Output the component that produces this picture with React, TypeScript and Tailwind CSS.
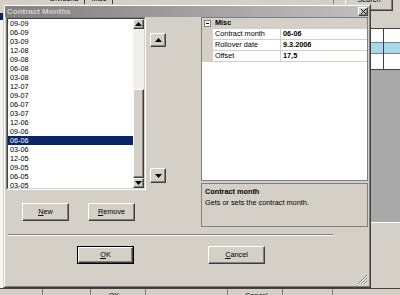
import React from 'react';

const months = [
  '09-09', '06-09', '03-09', '12-08', '09-08', '06-08', '03-08', '12-07', '09-07', '06-07',
  '03-07', '12-06', '09-06', '06-06', '03-06', '12-05', '09-05', '06-05', '03-05',
];

const props = [
  { name: 'Contract month', value: '06-06' },
  { name: 'Rollover date', value: '9.3.2006' },
  { name: 'Offset', value: '17,5' },
];

const raised =
  'bg-[#d4d0c8] border border-t-white border-l-white border-r-[#404040] border-b-[#404040] shadow-[inset_-1px_-1px_0_#808080]';

const Btn = ({ label, w, isDefault }: { label: React.ReactNode; w: string; isDefault?: boolean }) => (
  <div className={`${w} h-[18px] ${isDefault ? 'border border-black' : ''}`}>
    <div className={`${raised} w-full h-full flex items-center justify-center text-black`}>{label}</div>
  </div>
);

const Arrow = ({ up }: { up?: boolean }) => (
  <svg width="7" height="4" viewBox="0 0 7 4">
    <polygon points={up ? '3.5,0 7,4 0,4' : '0,0 7,0 3.5,4'} fill="#000" />
  </svg>
);

const ListBox = () => (
  <div className="ml-[1px] w-[140px] h-[173px] border border-t-[#808080] border-l-[#808080] border-r-white border-b-white">
    <div className="w-full h-full border border-t-[#404040] border-l-[#404040] border-r-[#d4d0c8] border-b-[#d4d0c8] bg-white flex">
      <div className="flex-1 overflow-hidden">
        {months.map((m) =>
          m === '06-06' ? (
            <div key={m} className="h-[9px] leading-[9px] pl-[2px] bg-[#0a246a] text-white">
              {m}
            </div>
          ) : (
            <div key={m} className="h-[9px] leading-[9px] pl-[2px] text-black">
              {m}
            </div>
          )
        )}
      </div>
      <div className="w-[11px] flex flex-col">
        <div className={`${raised} h-[10px] flex items-center justify-center`}>
          <Arrow up />
        </div>
        <div className="h-[60px] bg-[#f1efea]" />
        <div className={`${raised} flex-1`} />
        <div className={`${raised} h-[10px] flex items-center justify-center`}>
          <Arrow />
        </div>
      </div>
    </div>
  </div>
);

const PropertyGrid = () => (
  <div className="flex flex-col">
    <div className="h-[164px] border border-[#808080] bg-white flex flex-col">
      <div className="h-[11px] bg-[#d4d0c8] flex items-center">
        <div className="ml-[2px] w-[7px] h-[7px] border border-[#808080] bg-white flex items-center justify-center">
          <div className="w-[3px] h-[1px] bg-black" />
        </div>
        <span className="ml-[4px] font-bold">Misc</span>
      </div>
      {props.map((p) => (
        <div key={p.name} className="h-[11px] flex">
          <div className="w-[11px] bg-[#d4d0c8]" />
          <div className="w-[67px] border-b border-[#d4d0c8] pl-[2px] leading-[10px] truncate">{p.name}</div>
          <div className="w-[1px] bg-[#d4d0c8]" />
          <div className="flex-1 border-b border-[#d4d0c8] pl-[2px] leading-[10px] font-bold">{p.value}</div>
        </div>
      ))}
    </div>
    <div className="mt-[2px] h-[44px] border border-[#808080] bg-[#d4d0c8] px-[3px] pt-[3px]">
      <div className="font-bold leading-[10px]">Contract month</div>
      <div className="leading-[11px]">Gets or sets the contract month.</div>
    </div>
  </div>
);

const Background = () => (
  <div className="absolute inset-0 bg-[#d4d0c8]">
    {/* left strip */}
    <div className="absolute left-0 top-[13px] w-[4px] h-[7px] bg-[#0a246a]" />
    <div className="absolute left-0 top-[20px] w-[4px] h-[268px] bg-[#f4f4f2]" />
    {/* top tabs */}
    <div className="absolute left-[44px] top-[-6px] h-[10px] flex text-black">
      <div className="px-[6px] border-r border-[#404040]">Dividend</div>
      <div className="px-[6px] border-r border-[#404040]">Misc</div>
    </div>
    <div className="absolute left-[333px] top-0 w-[1px] h-[4px] bg-[#808080]" />
    <div className={`absolute left-[345px] top-[-6px] w-[48px] h-[17px] ${raised} flex justify-center`}>
      <span className="leading-[10px]">Search</span>
    </div>
    {/* right grid */}
    <div className="absolute left-[369px] top-[28px] w-[31px] h-[42px] border-t border-b border-[#404040] bg-white flex flex-col">
      <div className="h-[14px] border-b border-[#808080]" />
      <div className="h-[11px] bg-[#a6d8ea] border-b border-[#808080]" />
      <div className="flex-1" />
      <div className="absolute left-[14px] top-0 w-[1px] h-full bg-[#404040]" />
    </div>
    <div className="absolute left-[369px] top-[70px] w-[31px] h-[152px] bg-[#a9a9a9]" />
    <div className="absolute left-[369px] top-[222px] w-[31px] h-[1px] bg-white" />
    {/* bottom strip */}
    <div className="absolute left-0 top-[288px] w-[400px] h-[7px] border-t border-[#404040] flex">
      <div className="w-[43px] border-r border-[#808080]" />
      <div className="w-[48px] border-r border-[#808080]" />
      <div className="w-[55px] border-r border-[#808080] text-center leading-[14px] pr-[8px]">OK</div>
      <div className="w-[82px] border-r border-[#808080]" />
      <div className="w-[55px] border-r border-[#808080] leading-[14px] pl-[17px]">Cancel</div>
      <div className="w-[50px] border-r border-[#808080]" />
    </div>
  </div>
);

export default function App() {
  return (
    <div
      className="relative w-[400px] h-[295px] overflow-hidden text-[7.3px] text-black"
      style={{ fontFamily: '"Liberation Sans", Arial, sans-serif' }}
    >
      <Background />
      {/* dialog */}
      <div className="absolute left-[3px] top-[4px] w-[368px] h-[284px] bg-[#d4d0c8] border border-t-[#d4d0c8] border-l-[#d4d0c8] border-r-[#404040] border-b-[#404040] shadow-[inset_1px_1px_0_#fff,inset_-1px_-1px_0_#808080] p-[1px] flex flex-col">
        <div className="h-[11px] bg-gradient-to-r from-[#808080] to-[#c0c0c0] flex items-center justify-between pl-[2px] pr-[1px]">
          <span className="font-bold text-[8px] text-[#d4d0c8] leading-[11px]">Contract Months</span>
          <div className={`${raised} w-[10px] h-[9px] flex items-center justify-center`}>
            <svg width="5" height="5" viewBox="0 0 5 5">
              <path d="M0 0L5 5M5 0L0 5" stroke="#000" strokeWidth="1" />
            </svg>
          </div>
        </div>
        <div className="flex">
          <div className="flex flex-col">
            <div className="flex">
              <ListBox />
              <div className="ml-[4px] flex flex-col">
                <div className={`${raised} mt-[16px] w-[16px] h-[14px] flex items-center justify-center`}>
                  <Arrow up />
                </div>
                <div className={`${raised} mt-[121px] w-[16px] h-[15px] flex items-center justify-center`}>
                  <Arrow />
                </div>
              </div>
            </div>
            <div className="mt-[13px] flex">
              <div className="ml-[17px]">
                <Btn w="w-[47px]" label={<span><u>N</u>ew</span>} />
              </div>
              <div className="ml-[19px]">
                <Btn w="w-[47px]" label={<span><u>R</u>emove</span>} />
              </div>
            </div>
          </div>
          <div className="ml-[35px] w-[167px]">
            <PropertyGrid />
          </div>
        </div>
        <div className="mt-[7px] ml-[3px] w-[325px] h-[2px] border-t border-[#808080] border-b border-b-white" />
        <div className="mt-[10px] flex">
          <div className="ml-[72px]">
            <Btn w="w-[57px]" isDefault label={<span><u>O</u>K</span>} />
          </div>
          <div className="ml-[74px]">
            <Btn w="w-[57px]" label={<span><u>C</u>ancel</span>} />
          </div>
        </div>
        <div className="absolute right-[2px] bottom-[2px]">
          <svg width="11" height="11" viewBox="0 0 11 11">
            <path d="M10 1L1 10M10 4L4 10M10 7L7 10" stroke="#808080" strokeWidth="1" />
            <path d="M10 2L2 10M10 5L5 10M10 8L8 10" stroke="#fff" strokeWidth="1" />
          </svg>
        </div>
      </div>
    </div>
  );
}
